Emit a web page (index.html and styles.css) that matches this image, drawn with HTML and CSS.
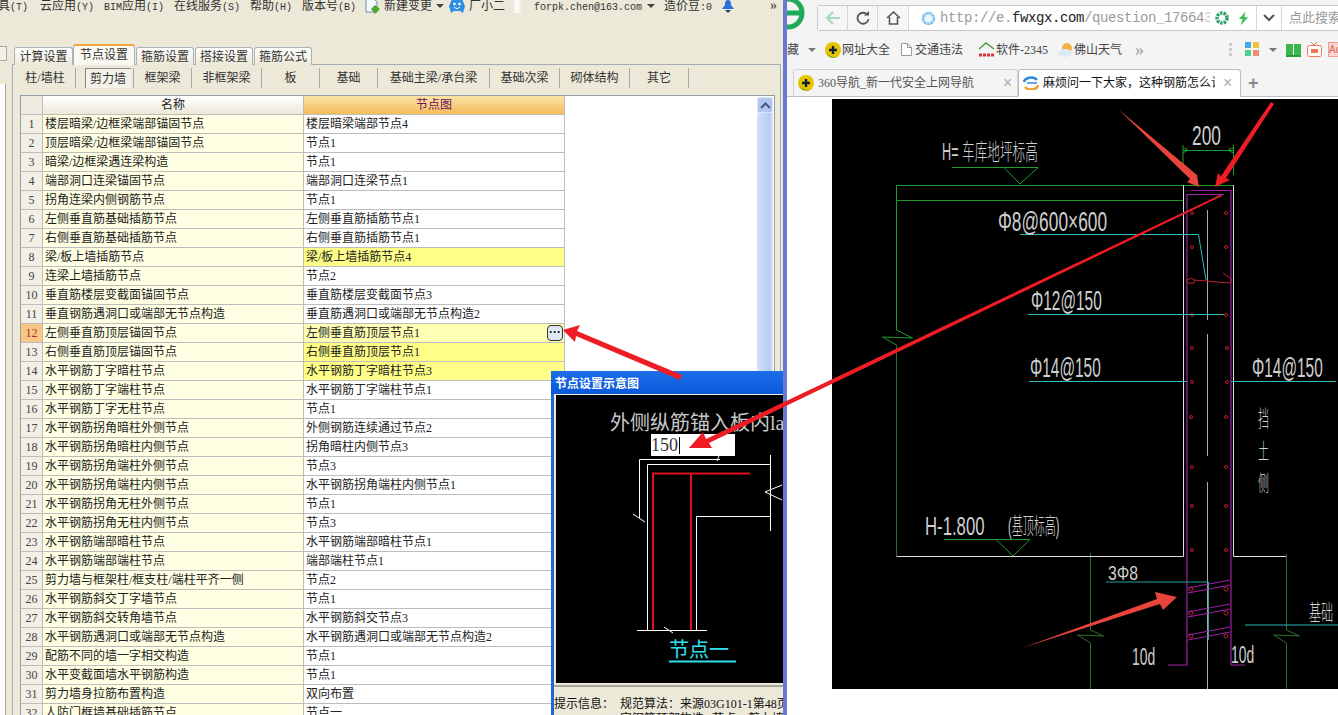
FILE: index.html
```html
<!DOCTYPE html>
<html lang="zh">
<head>
<meta charset="utf-8">
<title>节点设置</title>
<link rel="stylesheet" href="styles.css">
</head>
<body>
<svg class="defs" width="0" height="0"><defs>
<symbol id="nav360" viewBox="0 0 16 16"><circle cx="8" cy="8" r="8" fill="#e8c400"/><path d="M1 10a8 8 0 0 0 13 3.500A9 9 0 0 1 1 10z" fill="#2f9a2a"/><path d="M8 4v8M4 8h8" stroke="#123" stroke-width="2.400"/></symbol>
</defs></svg>
<div class="desktop">
  <section class="app">
    <div class="menubar">
      <span class="mi mi-first">具<i>(T)</i></span>
      <span class="mi mi-yun">云应用<i>(Y)</i></span>
      <span class="mi mi-bim"><i>BIM</i>应用<i>(I)</i></span>
      <span class="mi mi-online">在线服务<i>(S)</i></span>
      <span class="mi mi-help">帮助<i>(H)</i></span>
      <span class="mi mi-ver">版本号<i>(B)</i></span>
      <svg class="ico-doc" width="16" height="15" viewBox="0 0 16 15"><path d="M1 0h8l3 3v10H1z" fill="#f4f8ff" stroke="#6f8fb5"/><path d="M10 6l5 4-5 5-4-5z" fill="#4aa82c"/></svg>
      <span class="mi mi-new">新建变更</span>
      <span class="caret"></span>
      <svg class="ico-bot" width="16" height="14" viewBox="0 0 16 14"><path d="M3 0h10l3 7-2 7-3-2H5l-3 2-2-7z" fill="#2f8fe6"/><circle cx="5.500" cy="5" r="1.300" fill="#fff"/><circle cx="10.500" cy="5" r="1.300" fill="#fff"/><path d="M5 8c2 2 4 2 6 0" stroke="#fff" fill="none"/></svg>
      <span class="mi mi-xiao">厂小二</span>
      <span class="menu-sep"></span>
      <span class="mi mi-mail"><i>forpk.chen@163.com</i></span>
      <span class="caret caret-mail"></span>
      <span class="mi mi-dou">造价豆<i>:0</i></span>
      <svg class="ico-bell" width="12" height="13" viewBox="0 0 12 13"><path d="M6 0c3 0 3 3 3 5l3 4H0l3-4c0-2 0-5 3-5z" fill="#2b6fd8"/><path d="M3 10h6l-3 3z" fill="#15407e"/></svg>
      <span class="mi mi-more">»</span>
    </div>
    <div class="workspace">
      <div class="side"><span class="side-btn"></span><div class="side-pane"></div></div>
      <div class="main">
        <div class="tabs">
          <span class="tab tab-a">计算设置</span>
          <span class="tab tab-on">节点设置</span>
          <span class="tab tab-c">箍筋设置</span>
          <span class="tab tab-c">搭接设置</span>
          <span class="tab tab-c">箍筋公式</span>
        </div>
        <div class="panel">
          <div class="subtabs">
            <span class="st st-61">柱/墙柱</span>
            <span class="st st-58"><b class="st-on">剪力墙</b></span>
            <span class="st st-58">框架梁</span>
            <span class="st st-70">非框架梁</span>
            <span class="st st-58">板</span>
            <span class="st st-58">基础</span>
            <span class="st st-112">基础主梁/承台梁</span>
            <span class="st st-70">基础次梁</span>
            <span class="st st-70">砌体结构</span>
            <span class="st st-59">其它</span>
          </div>
          <div class="grid-wrap">
            <table class="grid">
              <colgroup><col class="c-n"><col class="c-a"><col class="c-b"></colgroup>
              <thead><tr><th class="h-n"></th><th class="h-a">名称</th><th class="h-b">节点图</th></tr></thead>
              <tbody>
                <tr><td class="n">1</td><td class="a">楼层暗梁/边框梁端部锚固节点</td><td>楼层暗梁端部节点4</td></tr>
                <tr><td class="n">2</td><td class="a">顶层暗梁/边框梁端部锚固节点</td><td>节点1</td></tr>
                <tr><td class="n">3</td><td class="a">暗梁/边框梁遇连梁构造</td><td>节点1</td></tr>
                <tr><td class="n">4</td><td class="a">端部洞口连梁锚固节点</td><td>端部洞口连梁节点1</td></tr>
                <tr><td class="n">5</td><td class="a">拐角连梁内侧钢筋节点</td><td>节点1</td></tr>
                <tr><td class="n">6</td><td class="a">左侧垂直筋基础插筋节点</td><td>左侧垂直筋插筋节点1</td></tr>
                <tr><td class="n">7</td><td class="a">右侧垂直筋基础插筋节点</td><td>右侧垂直筋插筋节点1</td></tr>
                <tr><td class="n">8</td><td class="a">梁/板上墙插筋节点</td><td class="hl">梁/板上墙插筋节点4</td></tr>
                <tr><td class="n">9</td><td class="a">连梁上墙插筋节点</td><td>节点2</td></tr>
                <tr><td class="n">10</td><td class="a">垂直筋楼层变截面锚固节点</td><td>垂直筋楼层变截面节点3</td></tr>
                <tr><td class="n">11</td><td class="a">垂直钢筋遇洞口或端部无节点构造</td><td>垂直筋遇洞口或端部无节点构造2</td></tr>
                <tr><td class="n n-on">12</td><td class="a">左侧垂直筋顶层锚固节点</td><td class="sel">左侧垂直筋顶层节点1</td></tr>
                <tr><td class="n">13</td><td class="a">右侧垂直筋顶层锚固节点</td><td class="hl">右侧垂直筋顶层节点1</td></tr>
                <tr><td class="n">14</td><td class="a">水平钢筋丁字暗柱节点</td><td class="hl">水平钢筋丁字暗柱节点3</td></tr>
                <tr><td class="n">15</td><td class="a">水平钢筋丁字端柱节点</td><td>水平钢筋丁字端柱节点1</td></tr>
                <tr><td class="n">16</td><td class="a">水平钢筋丁字无柱节点</td><td>节点1</td></tr>
                <tr><td class="n">17</td><td class="a">水平钢筋拐角暗柱外侧节点</td><td>外侧钢筋连续通过节点2</td></tr>
                <tr><td class="n">18</td><td class="a">水平钢筋拐角暗柱内侧节点</td><td>拐角暗柱内侧节点3</td></tr>
                <tr><td class="n">19</td><td class="a">水平钢筋拐角端柱外侧节点</td><td>节点3</td></tr>
                <tr><td class="n">20</td><td class="a">水平钢筋拐角端柱内侧节点</td><td>水平钢筋拐角端柱内侧节点1</td></tr>
                <tr><td class="n">21</td><td class="a">水平钢筋拐角无柱外侧节点</td><td>节点1</td></tr>
                <tr><td class="n">22</td><td class="a">水平钢筋拐角无柱内侧节点</td><td>节点3</td></tr>
                <tr><td class="n">23</td><td class="a">水平钢筋端部暗柱节点</td><td>水平钢筋端部暗柱节点1</td></tr>
                <tr><td class="n">24</td><td class="a">水平钢筋端部端柱节点</td><td>端部端柱节点1</td></tr>
                <tr><td class="n">25</td><td class="a">剪力墙与框架柱/框支柱/端柱平齐一侧</td><td>节点2</td></tr>
                <tr><td class="n">26</td><td class="a">水平钢筋斜交丁字墙节点</td><td>节点1</td></tr>
                <tr><td class="n">27</td><td class="a">水平钢筋斜交转角墙节点</td><td>水平钢筋斜交节点3</td></tr>
                <tr><td class="n">28</td><td class="a">水平钢筋遇洞口或端部无节点构造</td><td>水平钢筋遇洞口或端部无节点构造2</td></tr>
                <tr><td class="n">29</td><td class="a">配筋不同的墙一字相交构造</td><td>节点1</td></tr>
                <tr><td class="n">30</td><td class="a">水平变截面墙水平钢筋构造</td><td>节点1</td></tr>
                <tr><td class="n">31</td><td class="a">剪力墙身拉筋布置构造</td><td>双向布置</td></tr>
                <tr><td class="n">32</td><td class="a">人防门框墙基础插筋节点</td><td>节点一</td></tr>
              </tbody>
            </table>
            <div class="scroll">
              <div class="scroll-btn"><svg width="11" height="7" viewBox="0 0 11 7"><path d="M1 6l4.500-4.500L10 6" fill="none" stroke="#3f5a8c" stroke-width="2"/></svg></div>
              <div class="scroll-track"></div>
            </div>
          </div>
        </div>
      </div>
    </div>
    <span class="dots-btn">···</span>
    <div class="dialog">
      <div class="dlg-title">节点设置示意图</div>
      <div class="dlg-canvas">
        <svg class="dlg-svg" width="227" height="288" viewBox="556 395 227 288">
          <text class="dlg-head" x="610" y="430">外侧纵筋锚入板内la</text>
          <g fill="none" stroke="#fff">
            <path d="M720 459.500H639.500V518M633 514l12 8M647.500 630V464.500H770.500M770.500 455V531M770.500 516.500H696.500V630M637 630.500H707M664 627l9 6M782 485l-17 7 17 8"/>
            <path d="M720 453l-3 8"/>
          </g>
          <path d="M653 630V473.500H750M691 473V630" fill="none" stroke="#e01020" stroke-width="2"/>
          <text class="dlg-node" x="669" y="657">节点一</text>
          <path d="M669 661.500H736" stroke="#30e0f0" stroke-width="2"/>
        </svg>
        <div class="dlg-input">150<span class="dlg-caret"></span></div>
      </div>
      <div class="dlg-info">
        <p>提示信息： <span class="dlg-gap">规范算法：来源03G101-1第48页</span></p>
        <p class="dlg-info-2">定钢筋顶部构造" 节点：剪力墙</p>
      </div>
    </div>
  </section>
  <div class="divider"></div>
  <section class="browser">
    <div class="b-toolbar">
      <svg class="b-logo" width="18" height="31" viewBox="0 0 18 31"><circle cx="1" cy="13" r="14" fill="none" stroke="#1faa5a" stroke-width="5"/><path d="M-6 13H14" stroke="#1faa5a" stroke-width="5"/></svg>
      <div class="addr">
        <span class="addr-btn addr-back"><svg width="16" height="14" viewBox="0 0 16 14"><path d="M8 1L2 7l6 6M2 7h13" fill="none" stroke="#a6d8bc" stroke-width="2"/></svg></span>
        <span class="addr-btn addr-reload"><svg width="14" height="14" viewBox="0 0 14 14"><path d="M11.500 4A5.500 5.500 0 1 0 12.500 8" fill="none" stroke="#555" stroke-width="1.800"/><path d="M8 4.500h5V0z" fill="#555"/></svg></span>
        <span class="addr-btn addr-home"><svg width="15" height="14" viewBox="0 0 15 14"><path d="M1 7l6.500-6L14 7M3.500 6v7h8V6" fill="none" stroke="#555" stroke-width="1.600"/></svg></span>
        <div class="url">
          <svg class="url-globe" width="15" height="15" viewBox="0 0 15 15"><circle cx="7.500" cy="7.500" r="5.500" fill="#e8f3fc" stroke="#7fc0ee" stroke-width="2.500" stroke-dasharray="3 .6"/></svg>
          <span class="url-text">http://e.<b>fwxgx.com</b>/question_17664<span class="url-fade">3</span></span>
          <svg class="url-ico" width="14" height="14" viewBox="0 0 14 14"><circle cx="7" cy="7" r="5" fill="none" stroke="#2ea66a" stroke-width="3.500" stroke-dasharray="2.500 1"/></svg>
          <svg class="url-ico2" width="11" height="15" viewBox="0 0 12 15"><path d="M8 0L1 8h4l-2 7 8-9H7z" fill="#35c05a"/></svg>
        </div>
        <span class="addr-btn addr-down"><svg width="12" height="8" viewBox="0 0 12 8"><path d="M1 1l5 5 5-5" fill="none" stroke="#555" stroke-width="2"/></svg></span>
        <span class="search">点此搜索</span>
      </div>
    </div>
    <div class="b-marks">
      <span class="bm bm-fav">藏</span><span class="caret caret-fav"></span>
      <span class="bm"><svg width="16" height="16"><use href="#nav360"/></svg>网址大全</span>
      <span class="bm bm-g"><svg width="11" height="13" viewBox="0 0 11 13"><path d="M.5.500h6l4 4v8H.5zM6.500.500v4h4" fill="#fff" stroke="#999"/></svg>交通违法</span>
      <span class="bm bm-g2"><svg width="17" height="15" viewBox="0 0 17 15"><path d="M1 7l7-6 8 6" fill="none" stroke="#4a9a3a" stroke-width="1.500"/><path d="M1 13h15" stroke="#d33" stroke-width="3" stroke-dasharray="3 1"/></svg>软件-2345</span>
      <span class="bm bm-g3"><svg width="15" height="15" viewBox="0 0 15 15"><circle cx="9" cy="6" r="5" fill="#f4b041"/><ellipse cx="7" cy="11" rx="7" ry="4" fill="#dcebf4"/></svg>佛山天气</span>
      <span class="bm-more">»</span>
      <span class="bm-tools">
        <span class="grip"></span>
        <svg width="15" height="15" viewBox="0 0 15 15"><rect width="6" height="6" fill="#4aa8e8"/><rect x="8" width="6" height="6" fill="#f1c232"/><rect y="8" width="6" height="6" fill="#4ad08a"/><rect x="8" y="8" width="6" height="6" fill="#f08a78"/></svg>
        <span class="caret caret-tool"></span>
        <svg width="15" height="14" viewBox="0 0 15 14"><path d="M0 1h7v11H0zM8 1h7v11H8z" fill="#3cb54a"/><path d="M0 12h15v2H0z" fill="#2a9a3a"/></svg>
        <svg width="15" height="15" viewBox="0 0 15 15"><rect x=".5" y="3.500" width="14" height="11" rx="2" fill="#fff" stroke="#f07858"/><rect x="4" y="7" width="7" height="4" fill="#f07858"/><path d="M4 0l3 3 3-3" fill="none" stroke="#f07858"/></svg>
        <span class="ad">Ad</span>
      </span>
    </div>
    <div class="b-tabs">
      <span class="b-tab"><svg width="16" height="16"><use href="#nav360"/></svg><span class="b-tab-t">360导航_新一代安全上网导航</span><span class="x">×</span></span>
      <span class="b-tab b-tab-on"><svg width="16" height="14" viewBox="0 0 16 14"><path d="M1 6a7 5 0 0 1 13-2" fill="none" stroke="#2a8ae0" stroke-width="2.500"/><path d="M15 9a7 5 0 0 1-13 2" fill="none" stroke="#f0a030" stroke-width="2.500"/><path d="M4 7h10" stroke="#2a8ae0" stroke-width="1.500"/></svg><span class="b-tab-t b-tab-dark">麻烦问一下大家，这种钢筋怎么计</span><span class="x">×</span></span>
      <span class="b-plus">+</span>
    </div>
    <div class="b-content">
      <svg class="cad" width="506" height="590" viewBox="832 99 506 590">
        <g fill="none" stroke="#1c9c2c">
          <path d="M896.500 330V185.500H1233M896.500 200.500H1183M952 167.500H1038L1020 184 1004 167.500"/>
          <path d="M896.500 330l16 8-30-1 14 8"/>
          <path d="M1183 150.500H1234M1183 145V170M1233.500 145V175M1183 153l5-3-5-2M1233 153l-5-3 5-2"/>
          <path d="M944 539.500H1030L1013 556 996 539.500"/>
        </g>
        <g fill="none" stroke="#2f6f2f">
          <path d="M896.500 345V556M1090.500 553V630l13 6-26-1 13 8V689M1286.500 554V630l13 6-26-1 13 8V689"/>
        </g>
        <path d="M896.500 556.500H1183.500V185M1233.500 185V556.500H1286" fill="none" stroke="#ddd"/>
        <path d="M1207.500 210V320M1207.500 334V456M1207.500 482V689" stroke="#aaa" fill="none"/>
        <path d="M1191 190.500H1231V665H1245M1224 194.500H1187V665H1168" fill="none" stroke="#a020a8" stroke-width="1.200"/>
        <g fill="none" stroke="#c02030">
          <circle cx="1192" cy="213" r="1.500"/><circle cx="1226" cy="213" r="1.500"/>
          <circle cx="1192" cy="247" r="1.500"/><circle cx="1226" cy="247" r="1.500"/>
          <circle cx="1192" cy="315" r="1.500"/><circle cx="1226" cy="315" r="1.500"/>
          <circle cx="1192" cy="348" r="1.500"/><circle cx="1227" cy="348" r="1.500"/>
          <circle cx="1192" cy="382" r="1.500"/><circle cx="1227" cy="382" r="1.500"/>
          <circle cx="1191" cy="417" r="1.500"/><circle cx="1226" cy="417" r="1.500"/>
          <circle cx="1192" cy="467" r="1.500"/><circle cx="1226" cy="467" r="1.500"/>
          <circle cx="1192" cy="506" r="1.500"/><circle cx="1226" cy="506" r="1.500"/>
          <circle cx="1192" cy="550" r="1.500"/><circle cx="1226" cy="550" r="1.500"/>
          <path d="M1187 280c5-3 9-1 7 3h-6c-2-1-2-2-1-3zM1194 280l36 3c2 0 2-4 0-5l-7-5"/>
          <circle cx="1191" cy="589" r="2"/><circle cx="1226" cy="589" r="2"/>
          <circle cx="1191" cy="613" r="2"/><circle cx="1226" cy="613" r="2"/>
          <circle cx="1191" cy="636" r="2"/><circle cx="1226" cy="636" r="2"/>
        </g>
        <g fill="none" stroke="#a020a8">
          <path d="M1188 593L1230 585M1188 588L1230 580M1188 617L1230 609M1188 612L1230 604M1188 640L1230 632M1188 635L1230 627"/>
        </g>
        <g fill="none" stroke="#2fb8b8">
          <path d="M1020 234.500H1198.500L1206 280M1028 314.500H1224M1029 381.500H1187M1231 381.500H1336M1245 625H1338"/>
          <path d="M1106 582H1208.500V640" stroke="#2aa0a0"/>
        </g>
        <g class="cad-t">
          <text transform="translate(942 160) scale(.55 1)" font-size="23">H= 车库地坪标高</text>
          <text transform="translate(1192 145) scale(.62 1)" font-size="28">200</text>
          <text transform="translate(998 231) scale(.62 1)" font-size="28">Φ8@600×600</text>
          <text transform="translate(1031 310) scale(.55 1)" font-size="28">Φ12@150</text>
          <text transform="translate(1030 377) scale(.55 1)" font-size="28">Φ14@150</text>
          <text transform="translate(1252 377) scale(.55 1)" font-size="28">Φ14@150</text>
          <text transform="translate(1258 426) scale(.5 1)" font-size="22">挡</text>
          <text transform="translate(1258 459) scale(.5 1)" font-size="22">土</text>
          <text transform="translate(1258 491) scale(.5 1)" font-size="22">侧</text>
          <text transform="translate(925 535) scale(.67 1)" font-size="25">H-1.800</text>
          <text transform="translate(1008 534) scale(.48 1)" font-size="23">(基顶标高)</text>
          <text transform="translate(1108 580) scale(.75 1)" font-size="21">3Φ8</text>
          <text transform="translate(1132 665) scale(.58 1)" font-size="24">10d</text>
          <text transform="translate(1231 663) scale(.58 1)" font-size="24">10d</text>
          <text transform="translate(1309 620) scale(.55 1)" font-size="22">基础</text>
        </g>
      </svg>
    </div>
  </section>
  <svg class="arrows" width="1338" height="715" viewBox="0 0 1338 715">
    <path d="M1118 109L1197 175 1199 187 1187 182 1190 179z" fill="#e8443c"/>
    <path d="M1271 102L1221 176 1218 173 1215 187 1230 180 1226 178 1274 104z" fill="#ee1c24"/>
    <path d="M1221 194.500L706 439 703 432 689 448 712 448 709 443 1222 196z" fill="#ee1c24"/>
    <path d="M682 375L577 331 580 325 563 330 575 342 576 336 680 380z" fill="#ee1c24"/>
    <path d="M1022 648L1160 604 1163 610 1177 597 1155 592 1157 599z" fill="#e8443c"/>
  </svg>
</div>
</body>
</html>
```

FILE: styles.css
```css
* { box-sizing: border-box; }
html, body { margin: 0; padding: 0; background: #fff; }
body {
  font: 12px/16px "Liberation Serif", "Noto Sans CJK SC", serif;
  color: #222;
  overflow: hidden;
}
.defs { display: block; height: 0; }
.desktop { position: relative; display: flex; width: 1338px; height: 715px; overflow: hidden; }

/* application window */
.app {
  position: relative;
  display: flex;
  flex-direction: column;
  flex: 0 0 783px;
  width: 783px;
  overflow: hidden;
  background: #ece9d8;
}
.menubar { display: flex; align-items: center; height: 12px; white-space: nowrap; margin-left: -2px; }
.mi { flex: none; color: #333; letter-spacing: 0; }
.mi i { font: normal 10px "Liberation Mono", monospace; }
.mi-first { width: 42px; }
.mi-yun { width: 64px; }
.mi-bim { width: 70px; }
.mi-online { width: 76px; }
.mi-help { width: 52px; }
.mi-ver { width: 63px; }
.ico-doc { flex: none; margin-right: 3px; }
.mi-new { width: 52px; }
.caret { flex: none; width: 0; height: 0; border: 4px solid transparent; border-top-color: #444; border-bottom: 0; }
.ico-bot { flex: none; margin-left: 5px; }
.mi-xiao { width: 38px; margin-left: 4px; }
.menu-sep { flex: none; width: 10px; height: 14px; margin: 0 12px 0 5px; background: linear-gradient(90deg, #ece9d8, #fff 50%, #ece9d8); }
.mi-mail { width: 110px; }
.caret-mail { margin: 0 9px 0 3px; }
.mi-dou { width: 58px; }
.ico-bell { flex: none; }
.mi-more { margin-left: 36px; font-size: 14px; }

.workspace { display: flex; flex: 1; min-height: 0; margin-top: 32px; }
.side { flex: 0 0 12px; display: flex; flex-direction: column; }
.side-btn { width: 7px; height: 15px; margin-top: 2px; border: 1px solid #aaa; border-left: 0; background: #f4f2e6; }
.side-pane { flex: 1; width: 6px; margin-top: 23px; background: #fff; border-right: 1px solid #a5a5a5; }
.main { flex: 1; display: flex; flex-direction: column; min-width: 0; margin-right: 2px; }

.tabs { position: relative; z-index: 1; display: flex; align-items: flex-end; height: 21px; margin-bottom: -1px; padding-left: 2px; }
.tab {
  height: 18px;
  border: 1px solid #a9b3b8;
  border-bottom: 0;
  border-radius: 3px 3px 0 0;
  background: linear-gradient(#fff, #ece9d8);
  text-align: center;
  line-height: 19px;
  color: #333;
}
.tab-a { width: 59px; }
.tab-c { width: 58px; margin-right: 1px; }
.tab-on {
  width: 62px;
  height: 21px;
  margin-right: 1px;
  border-top: 2px solid #f4a73a;
  background: #f9f8f1;
  line-height: 18px;
}
.panel {
  display: flex;
  flex-direction: column;
  flex: 1;
  min-height: 0;
  padding: 3px 5px 0 2px;
  border: 1px solid #a3afb5;
  border-bottom: 0;
}
.subtabs { display: flex; height: 20px; }
.st { flex: none; display: flex; align-items: center; justify-content: center; border-right: 1px solid #aaa; color: #333; }
.st-58 { width: 58px; }
.st-59 { width: 59px; }
.st-61 { width: 61px; }
.st-70 { width: 70px; }
.st-112 { width: 112px; }
.st-on { width: 46px; height: 20px; margin-left: 6px; font-weight: normal; text-align: center; line-height: 21px; background: #f4f3ea; border-left: 1px solid #888; border-top: 1px solid #888; }

.grid-wrap { display: flex; justify-content: space-between; align-items: flex-start; flex: 1; min-height: 0; margin: 7px 0 0 5px; border: 1px solid #92a0a8; border-bottom: 0; background: #fff; overflow: hidden; }
.grid { flex: none; width: 544px; table-layout: fixed; border-collapse: separate; border-spacing: 0; }
.c-n { width: 22px; }
.c-a { width: 261px; }
.c-b { width: 261px; }
.grid th, .grid td { height: 19px; padding: 0 2px; border-right: 1px solid #bdbdbd; border-bottom: 1px solid #bdbdbd; font-weight: normal; line-height: 18px; white-space: nowrap; overflow: hidden; }
.h-n { background: #eeece2; }
.h-a { background: linear-gradient(#fff, #ece9d8); }
.grid .h-b { background: linear-gradient(#fae3a8, #f5bc5c); color: #6c1060; }
.grid .n { padding: 0; background: #f1efe6; text-align: center; color: #444; }
.grid .n-on { background: #f9c684; color: #a5352c; }
.grid .a { background: #ffffe3; }
.grid .hl { background: #ffff88; }
.grid .sel { background: #ffffb4; }
.scroll { flex: none; align-self: stretch; display: flex; flex-direction: column; width: 16px; margin: 1px 1px 0 0; }
.scroll-btn { display: flex; align-items: center; justify-content: center; height: 16px; background: #b4c6ee; border: 1px solid #dbe5fa; border-radius: 2px; }
.scroll-track { flex: 1; background: linear-gradient(90deg, #d5e0fa, #b8c9f5 80%, #dfe6f8); }

.dots-btn {
  position: absolute;
  left: 547px;
  top: 325px;
  width: 16px;
  height: 16px;
  border: 1px solid #333;
  border-radius: 4px;
  background: #e0e8f4;
  text-align: center;
  font: bold 12px/12px "Liberation Sans", sans-serif;
  color: #111;
}

.dialog { position: absolute; left: 551px; top: 371px; width: 240px; height: 344px; background: #ece9d8; border-left: 3px solid #1e68d8; }
.dlg-title { height: 23px; margin-left: -3px; padding: 2px 0 0 4px; background: linear-gradient(#1d6ee8, #0a58dc); color: #fff; font-weight: bold; line-height: 22px; }
.dlg-canvas { position: relative; height: 288px; margin: 1px 0 0 2px; background: #000; }
.dlg-svg { display: block; }
.dlg-head { font: 20px "Liberation Serif", "Noto Sans CJK SC", serif; fill: #c9c9c9; }
.dlg-node { font: 20px "Noto Sans CJK SC", sans-serif; fill: #30e0f0; }
.dlg-input { position: absolute; left: 95px; top: 39px; width: 84px; height: 22px; background: #fff; color: #333; font: 18px/22px "Liberation Serif", serif; }
.dlg-caret { display: inline-block; width: 1px; height: 17px; margin-left: 1px; background: #000; vertical-align: -3px; }
.dlg-info { margin-top: 2px; padding-top: 10px; border-top: 2px solid #a9a698; }
.dlg-info p { margin: 0; white-space: nowrap; line-height: 15px; color: #111; }
.dlg-gap { margin-left: 3px; }
.dlg-info-2 { padding-left: 66px; }

.divider { flex: 0 0 4px; background: #6a78d2; }

/* browser window */
.browser { flex: 1; min-width: 0; display: flex; flex-direction: column; background: #f4f4f4; }
.b-toolbar { display: flex; height: 31px; padding-top: 5px; }
.b-logo { flex: none; margin: -5px 12px 0 0; }
.addr { flex: 1; display: flex; align-items: stretch; height: 26px; border: 1px solid #c9c9c9; border-right: 0; border-radius: 3px 0 0 3px; background: #fff; min-width: 0; }
.addr-btn { flex: none; display: flex; align-items: center; justify-content: center; background: #f6f6f6; border-right: 1px solid #d6d6d6; }
.addr-back { width: 30px; }
.addr-reload { width: 30px; }
.addr-home { width: 31px; }
.url { flex: none; display: flex; align-items: center; width: 348px; padding-left: 12px; border-right: 1px solid #d6d6d6; white-space: nowrap; }
.url-globe { flex: none; }
.url-text { flex: none; width: 270px; margin-left: 4px; overflow: hidden; font: 14px "Liberation Mono", monospace; letter-spacing: -.4px; color: #9a9a9a; }
.url-text b { font-weight: normal; color: #222; }
.url-fade { color: #ccc; }
.url-ico { flex: none; margin-left: 5px; }
.url-ico2 { flex: none; margin-left: 9px; }
.addr-down { width: 25px; background: #fff; }
.search { flex: 1; padding-left: 7px; font-size: 13px; line-height: 24px; color: #999; white-space: nowrap; overflow: hidden; }

.b-marks { display: flex; align-items: center; height: 37px; padding-left: 0; white-space: nowrap; color: #444; }
.bm { flex: none; display: flex; align-items: center; gap: 1px; }
.bm-fav { width: 12px; }
.caret-fav { margin: 0 9px 0 9px; border-top-color: #777; }
.bm-g { margin-left: 11px; gap: 3px; }
.bm-g2 { margin-left: 15px; gap: 1px; }
.bm-g3 { margin-left: 10px; gap: 1px; }
.bm-more { flex: none; margin-left: 13px; font-size: 18px; color: #999; }
.bm-tools { display: flex; align-items: center; gap: 6px; margin-left: 85px; }
.grip { width: 3px; height: 14px; background: repeating-linear-gradient(#ccc 0 3px, transparent 3px 5px); margin-right: 7px; }
.caret-tool { margin: 0 3px; border-top-color: #777; }
.ad { width: 16px; height: 15px; overflow: hidden; background: #fbd5d0; border: 1px solid #f09a90; color: #d06a60; font: 10px/13px "Liberation Sans", sans-serif; }

.b-tabs { display: flex; align-items: flex-end; height: 29px; padding-left: 6px; border-bottom: 1px solid #bdbdbd; }
.b-tab { flex: none; display: flex; align-items: center; gap: 4px; width: 225px; height: 28px; padding-left: 4px; margin-bottom: -1px; border: 1px solid #d0d0d0; border-bottom: 1px solid #bdbdbd; border-radius: 3px 3px 0 0; color: #555; white-space: nowrap; }
.b-tab > svg { flex: none; }
.b-tab-t { flex: none; width: 156px; overflow: hidden; margin-right: 25px; }
.b-tab-on { width: 223px; background: #fff; border-color: #bdbdbd; border-bottom-color: #fff; }
.b-tab-on .b-tab-t { margin-right: 4px; width: 172px; }
.b-tab-dark { color: #111; }
.x { flex: none; font: 16px "Liberation Sans", sans-serif; color: #aaa; }
.b-plus { margin: 0 0 2px 7px; font: bold 18px "Liberation Sans", sans-serif; color: #888; }

.b-content { flex: 1; min-height: 0; padding: 2px 0 0 45px; background: #fff; }
.cad { display: block; background: #000; }
.cad-t text { fill: #cfcfcf; font-family: "Liberation Sans", "Noto Sans CJK SC", sans-serif; font-weight: 300; }

.arrows { position: absolute; left: 0; top: 0; pointer-events: none; }
```
